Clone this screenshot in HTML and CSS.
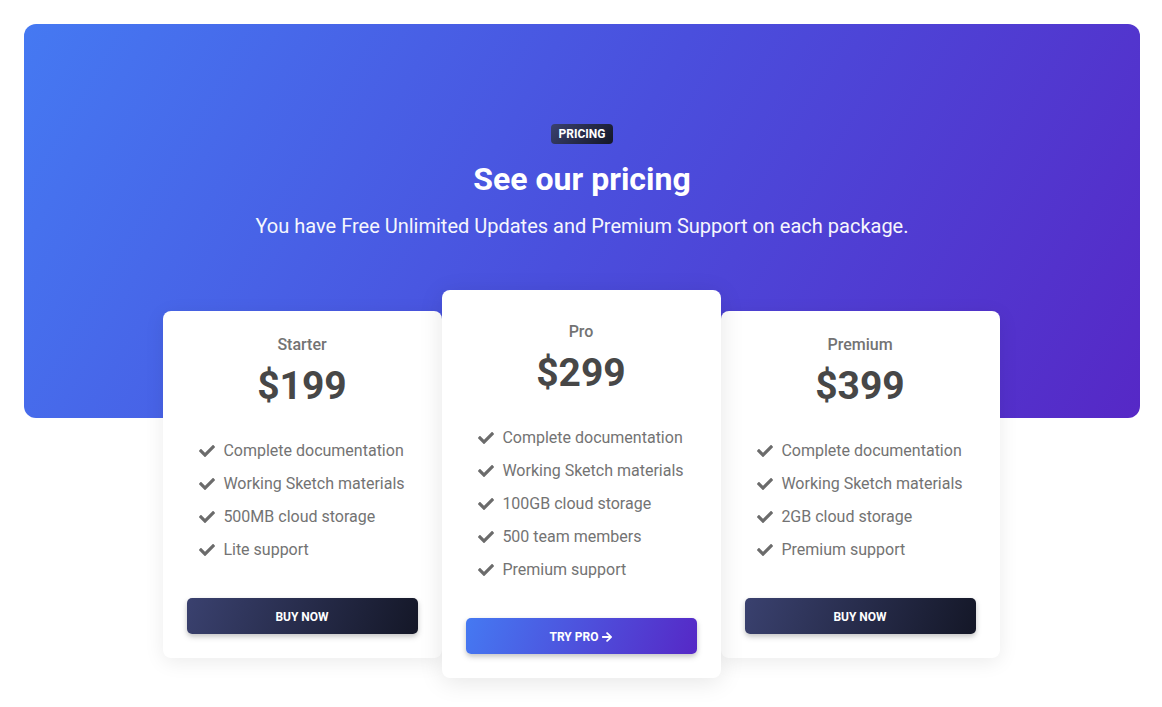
FILE: index.html
```html
<!DOCTYPE html>
<html lang="en">
<head>
<meta charset="utf-8">
<title>Pricing</title>
<link rel="stylesheet" href="styles.css">
</head>
<body>
<section class="page">
  <header class="hero">
    <span class="badge">Pricing</span>
    <h1 class="hero-title">See our pricing</h1>
    <p class="hero-lead">You have Free Unlimited Updates and Premium Support on each package.</p>
  </header>
  <div class="cards">
    <article class="card">
      <h2 class="plan">Starter</h2>
      <div class="price">$199</div>
      <ul class="features">
        <li><svg class="check" viewBox="0 0 512 512"><path d="M173.898 439.404l-166.4-166.4c-9.997-9.997-9.997-26.206 0-36.204l36.203-36.204c9.997-9.998 26.207-9.998 36.204 0L192 312.69 432.095 72.596c9.997-9.997 26.207-9.997 36.204 0l36.203 36.204c9.997 9.997 9.997 26.206 0 36.204l-294.4 294.401c-9.998 9.997-26.207 9.997-36.204-.001z"/></svg>Complete documentation</li>
        <li><svg class="check" viewBox="0 0 512 512"><path d="M173.898 439.404l-166.4-166.4c-9.997-9.997-9.997-26.206 0-36.204l36.203-36.204c9.997-9.998 26.207-9.998 36.204 0L192 312.69 432.095 72.596c9.997-9.997 26.207-9.997 36.204 0l36.203 36.204c9.997 9.997 9.997 26.206 0 36.204l-294.4 294.401c-9.998 9.997-26.207 9.997-36.204-.001z"/></svg>Working Sketch materials</li>
        <li><svg class="check" viewBox="0 0 512 512"><path d="M173.898 439.404l-166.4-166.4c-9.997-9.997-9.997-26.206 0-36.204l36.203-36.204c9.997-9.998 26.207-9.998 36.204 0L192 312.69 432.095 72.596c9.997-9.997 26.207-9.997 36.204 0l36.203 36.204c9.997 9.997 9.997 26.206 0 36.204l-294.4 294.401c-9.998 9.997-26.207 9.997-36.204-.001z"/></svg>500MB cloud storage</li>
        <li><svg class="check" viewBox="0 0 512 512"><path d="M173.898 439.404l-166.4-166.4c-9.997-9.997-9.997-26.206 0-36.204l36.203-36.204c9.997-9.998 26.207-9.998 36.204 0L192 312.69 432.095 72.596c9.997-9.997 26.207-9.997 36.204 0l36.203 36.204c9.997 9.997 9.997 26.206 0 36.204l-294.4 294.401c-9.998 9.997-26.207 9.997-36.204-.001z"/></svg>Lite support</li>
      </ul>
      <button class="btn btn-dark">Buy now</button>
    </article>
    <article class="card card-pro">
      <h2 class="plan">Pro</h2>
      <div class="price">$299</div>
      <ul class="features">
        <li><svg class="check" viewBox="0 0 512 512"><path d="M173.898 439.404l-166.4-166.4c-9.997-9.997-9.997-26.206 0-36.204l36.203-36.204c9.997-9.998 26.207-9.998 36.204 0L192 312.69 432.095 72.596c9.997-9.997 26.207-9.997 36.204 0l36.203 36.204c9.997 9.997 9.997 26.206 0 36.204l-294.4 294.401c-9.998 9.997-26.207 9.997-36.204-.001z"/></svg>Complete documentation</li>
        <li><svg class="check" viewBox="0 0 512 512"><path d="M173.898 439.404l-166.4-166.4c-9.997-9.997-9.997-26.206 0-36.204l36.203-36.204c9.997-9.998 26.207-9.998 36.204 0L192 312.69 432.095 72.596c9.997-9.997 26.207-9.997 36.204 0l36.203 36.204c9.997 9.997 9.997 26.206 0 36.204l-294.4 294.401c-9.998 9.997-26.207 9.997-36.204-.001z"/></svg>Working Sketch materials</li>
        <li><svg class="check" viewBox="0 0 512 512"><path d="M173.898 439.404l-166.4-166.4c-9.997-9.997-9.997-26.206 0-36.204l36.203-36.204c9.997-9.998 26.207-9.998 36.204 0L192 312.69 432.095 72.596c9.997-9.997 26.207-9.997 36.204 0l36.203 36.204c9.997 9.997 9.997 26.206 0 36.204l-294.4 294.401c-9.998 9.997-26.207 9.997-36.204-.001z"/></svg>100GB cloud storage</li>
        <li><svg class="check" viewBox="0 0 512 512"><path d="M173.898 439.404l-166.4-166.4c-9.997-9.997-9.997-26.206 0-36.204l36.203-36.204c9.997-9.998 26.207-9.998 36.204 0L192 312.69 432.095 72.596c9.997-9.997 26.207-9.997 36.204 0l36.203 36.204c9.997 9.997 9.997 26.206 0 36.204l-294.4 294.401c-9.998 9.997-26.207 9.997-36.204-.001z"/></svg>500 team members</li>
        <li><svg class="check" viewBox="0 0 512 512"><path d="M173.898 439.404l-166.4-166.4c-9.997-9.997-9.997-26.206 0-36.204l36.203-36.204c9.997-9.998 26.207-9.998 36.204 0L192 312.69 432.095 72.596c9.997-9.997 26.207-9.997 36.204 0l36.203 36.204c9.997 9.997 9.997 26.206 0 36.204l-294.4 294.401c-9.998 9.997-26.207 9.997-36.204-.001z"/></svg>Premium support</li>
      </ul>
      <button class="btn btn-primary">Try Pro <svg class="arrow" viewBox="0 0 448 512"><path d="M190.5 66.9l22.2-22.2c9.4-9.4 24.6-9.4 33.9 0L441 239c9.4 9.4 9.4 24.6 0 33.9L246.6 467.3c-9.4 9.4-24.6 9.4-33.9 0l-22.2-22.2c-9.5-9.5-9.3-25 .4-34.3L311.4 296H24c-13.3 0-24-10.7-24-24v-32c0-13.3 10.7-24 24-24h287.4L190.9 101.2c-9.8-9.3-10-24.8-.4-34.3z"/></svg></button>
    </article>
    <article class="card">
      <h2 class="plan">Premium</h2>
      <div class="price">$399</div>
      <ul class="features">
        <li><svg class="check" viewBox="0 0 512 512"><path d="M173.898 439.404l-166.4-166.4c-9.997-9.997-9.997-26.206 0-36.204l36.203-36.204c9.997-9.998 26.207-9.998 36.204 0L192 312.69 432.095 72.596c9.997-9.997 26.207-9.997 36.204 0l36.203 36.204c9.997 9.997 9.997 26.206 0 36.204l-294.4 294.401c-9.998 9.997-26.207 9.997-36.204-.001z"/></svg>Complete documentation</li>
        <li><svg class="check" viewBox="0 0 512 512"><path d="M173.898 439.404l-166.4-166.4c-9.997-9.997-9.997-26.206 0-36.204l36.203-36.204c9.997-9.998 26.207-9.998 36.204 0L192 312.69 432.095 72.596c9.997-9.997 26.207-9.997 36.204 0l36.203 36.204c9.997 9.997 9.997 26.206 0 36.204l-294.4 294.401c-9.998 9.997-26.207 9.997-36.204-.001z"/></svg>Working Sketch materials</li>
        <li><svg class="check" viewBox="0 0 512 512"><path d="M173.898 439.404l-166.4-166.4c-9.997-9.997-9.997-26.206 0-36.204l36.203-36.204c9.997-9.998 26.207-9.998 36.204 0L192 312.69 432.095 72.596c9.997-9.997 26.207-9.997 36.204 0l36.203 36.204c9.997 9.997 9.997 26.206 0 36.204l-294.4 294.401c-9.998 9.997-26.207 9.997-36.204-.001z"/></svg>2GB cloud storage</li>
        <li><svg class="check" viewBox="0 0 512 512"><path d="M173.898 439.404l-166.4-166.4c-9.997-9.997-9.997-26.206 0-36.204l36.203-36.204c9.997-9.998 26.207-9.998 36.204 0L192 312.69 432.095 72.596c9.997-9.997 26.207-9.997 36.204 0l36.203 36.204c9.997 9.997 9.997 26.206 0 36.204l-294.4 294.401c-9.998 9.997-26.207 9.997-36.204-.001z"/></svg>Premium support</li>
      </ul>
      <button class="btn btn-dark">Buy now</button>
    </article>
  </div>
</section>
</body>
</html>
```
FILE: styles.css
```css
* { box-sizing: border-box; }
html, body { margin: 0; padding: 0; background: #fff; }
body { font-family: Roboto, "Liberation Sans", sans-serif; color: #737373; }

.page { padding: 24px; }

.hero {
  height: 394px;
  margin-right: -2px;
  padding-top: 100px;
  border-radius: 12px;
  background: linear-gradient(120deg, #4579f2 0%, #4a4fdd 50%, #5628c6 100%);
  display: flex;
  flex-direction: column;
  align-items: center;
  text-align: center;
  color: #fff;
}

.badge {
  display: inline-block;
  height: 20px;
  line-height: 20px;
  padding: 0 8px;
  border-radius: 4px;
  background: linear-gradient(135deg, #3a416f, #141727);
  color: #fff;
  font-size: 12px;
  font-weight: 700;
  text-transform: uppercase;
}

.hero-title {
  margin: 14px 0 0;
  font-size: 32px;
  line-height: 42px;
  font-weight: 700;
}

.hero-lead {
  margin: 11px 0 0;
  font-size: 20px;
  line-height: 30px;
  font-weight: 400;
  opacity: 0.95;
}

.cards {
  display: flex;
  justify-content: center;
  align-items: center;
  margin-top: -128px;
}

.card {
  width: 279px;
  background: #fff;
  border-radius: 8px;
  padding: 22px 24px 24px;
  box-shadow: 0 4px 20px rgba(0, 0, 0, 0.08);
  display: flex;
  flex-direction: column;
  align-items: center;
}

.card-pro {
  position: relative;
  z-index: 2;
  padding-top: 30px;
  box-shadow: 0 4px 24px rgba(0, 0, 0, 0.1);
}

.plan {
  margin: 0;
  font-size: 16px;
  line-height: 24px;
  font-weight: 500;
  color: #737373;
}

.price {
  margin-top: 5px;
  font-size: 39px;
  line-height: 48px;
  font-weight: 700;
  color: #474747;
}

.features {
  list-style: none;
  margin: 29px 0 0;
  padding: 0;
  display: flex;
  flex-direction: column;
  gap: 9px;
}

.features li {
  display: flex;
  align-items: center;
  font-size: 16px;
  line-height: 24px;
  color: #737373;
}

.check {
  width: 16px;
  height: 16px;
  margin-right: 8px;
  fill: #6b6b6b;
  flex-shrink: 0;
}

.btn {
  align-self: stretch;
  margin-top: 36px;
  height: 36px;
  padding: 2px 0 0;
  border: 0;
  border-radius: 5px;
  color: #fff;
  font-family: inherit;
  font-size: 12px;
  font-weight: 700;
  text-transform: uppercase;
  display: flex;
  align-items: center;
  justify-content: center;
  gap: 4px;
  box-shadow: 0 3px 6px rgba(0, 0, 0, 0.15), 0 2px 4px rgba(0, 0, 0, 0.1);
}

.btn-dark { background: linear-gradient(110deg, #3a416f, #141727); }
.btn-primary { background: linear-gradient(110deg, #4579f2, #5628c6); }

.arrow {
  width: 10px;
  height: 12px;
  fill: #fff;
}
```
